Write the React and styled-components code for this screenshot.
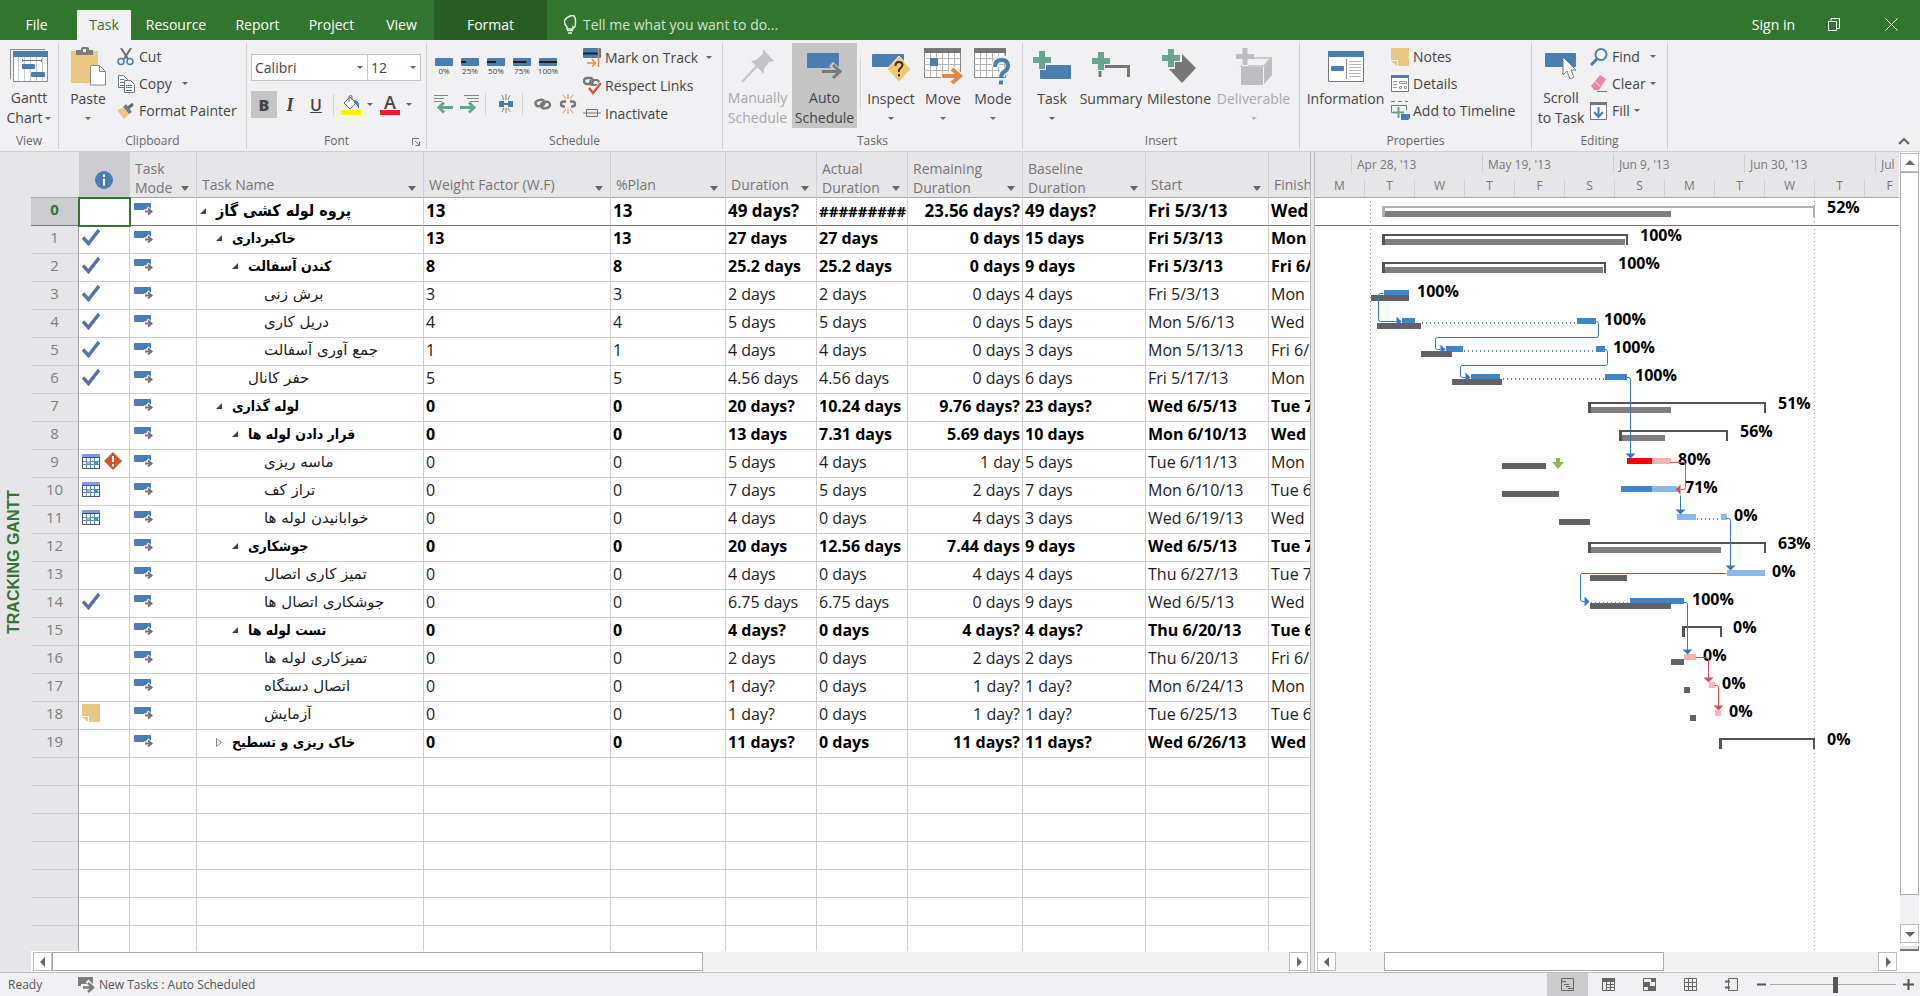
import { useState } from 'react';
import styled, { createGlobalStyle } from 'styled-components';

const GREEN = '#31752f';
const BLUE = '#4a7db1';
const GRAY = '#7c7c7e';
const TEAL = '#68a490';
const ORANGE = '#e08a44';

const ROW = 28;

const columns = [
  { id: 'id', label: [], width: 48 },
  { id: 'info', label: [], width: 51 },
  { id: 'mode', label: ['Task', 'Mode'], width: 67 },
  { id: 'name', label: ['Task Name'], width: 227 },
  { id: 'weight', label: ['Weight Factor (W.F)'], width: 187 },
  { id: 'plan', label: ['%Plan'], width: 115 },
  { id: 'duration', label: ['Duration'], width: 91 },
  { id: 'actual', label: ['Actual', 'Duration'], width: 91 },
  { id: 'remaining', label: ['Remaining', 'Duration'], width: 115 },
  { id: 'baseline', label: ['Baseline', 'Duration'], width: 123 },
  { id: 'start', label: ['Start'], width: 123 },
  { id: 'finish', label: ['Finish'], width: 120 },
];

// level, outline state, marks, name, weight, plan, duration, actual, remaining, baseline, start, finish
const tasks = [
  [0, 'open', [], 'پروه لوله کشی گاز', '13', '13', '49 days?', '#########', '23.56 days?', '49 days?', 'Fri 5/3/13', 'Wed'],
  [1, 'open', ['done'], 'خاکبرداری', '13', '13', '27 days', '27 days', '0 days', '15 days', 'Fri 5/3/13', 'Mon'],
  [2, 'open', ['done'], 'کندن آسفالت', '8', '8', '25.2 days', '25.2 days', '0 days', '9 days', 'Fri 5/3/13', 'Fri 6/'],
  [3, '', ['done'], 'برش زنی', '3', '3', '2 days', '2 days', '0 days', '4 days', 'Fri 5/3/13', 'Mon'],
  [3, '', ['done'], 'دریل کاری', '4', '4', '5 days', '5 days', '0 days', '5 days', 'Mon 5/6/13', 'Wed'],
  [3, '', ['done'], 'جمع آوری آسفالت', '1', '1', '4 days', '4 days', '0 days', '3 days', 'Mon 5/13/13', 'Fri 6/'],
  [2, '', ['done'], 'حفر کانال', '5', '5', '4.56 days', '4.56 days', '0 days', '6 days', 'Fri 5/17/13', 'Mon'],
  [1, 'open', [], 'لوله گذاری', '0', '0', '20 days?', '10.24 days', '9.76 days?', '23 days?', 'Wed 6/5/13', 'Tue 7'],
  [2, 'open', [], 'قرار دادن لوله ها', '0', '0', '13 days', '7.31 days', '5.69 days', '10 days', 'Mon 6/10/13', 'Wed'],
  [3, '', ['calendar', 'warning'], 'ماسه ریزی', '0', '0', '5 days', '4 days', '1 day', '5 days', 'Tue 6/11/13', 'Mon'],
  [3, '', ['calendar'], 'تراز کف', '0', '0', '7 days', '5 days', '2 days', '7 days', 'Mon 6/10/13', 'Tue 6'],
  [3, '', ['calendar'], 'خوابانیدن لوله ها', '0', '0', '4 days', '0 days', '4 days', '3 days', 'Wed 6/19/13', 'Wed'],
  [2, 'open', [], 'جوشکاری', '0', '0', '20 days', '12.56 days', '7.44 days', '9 days', 'Wed 6/5/13', 'Tue 7'],
  [3, '', [], 'تمیز کاری اتصال', '0', '0', '4 days', '0 days', '4 days', '4 days', 'Thu 6/27/13', 'Tue 7'],
  [3, '', ['done'], 'جوشکاری اتصال ها', '0', '0', '6.75 days', '6.75 days', '0 days', '9 days', 'Wed 6/5/13', 'Wed'],
  [2, 'open', [], 'تست لوله ها', '0', '0', '4 days?', '0 days', '4 days?', '4 days?', 'Thu 6/20/13', 'Tue 6'],
  [3, '', [], 'تمیزکاری لوله ها', '0', '0', '2 days', '0 days', '2 days', '2 days', 'Thu 6/20/13', 'Fri 6/'],
  [3, '', [], 'اتصال دستگاه', '0', '0', '1 day?', '0 days', '1 day?', '1 day?', 'Mon 6/24/13', 'Mon'],
  [3, '', ['note'], 'آزمایش', '0', '0', '1 day?', '0 days', '1 day?', '1 day?', 'Tue 6/25/13', 'Tue 6'],
  [1, 'closed', [], 'خاک ریزی و تسطیح', '0', '0', '11 days?', '0 days', '11 days?', '11 days?', 'Wed 6/26/13', 'Wed'],
];

const emptyRows = 7;

// summary / baseline: [from, to], bars: [from, to, color], at: label x
const chartRows = [
  { summary: [67, 500], light: true, progress: 356, label: '52%', at: 512 },
  { summary: [67, 313], progress: 310, label: '100%', at: 325 },
  { summary: [67, 291], progress: 288, label: '100%', at: 303 },
  { bars: [[69, 94, 'done']], baseline: [56, 94], label: '100%', at: 102 },
  { bars: [[87, 100, 'done'], [262, 281, 'done']], split: [107, 261], baseline: [62, 106], label: '100%', at: 289 },
  { bars: [[131, 148, 'done'], [281, 290, 'done']], split: [149, 280], baseline: [106, 137], label: '100%', at: 298 },
  { bars: [[156, 185, 'done'], [290, 312, 'done']], split: [188, 289], baseline: [137, 187], label: '100%', at: 320 },
  { summary: [273, 451], progress: 356, label: '51%', at: 463 },
  { summary: [304, 413], progress: 350, label: '56%', at: 425 },
  { bars: [[312, 337, 'criticalDone'], [337, 356, 'critical']], baseline: [187, 231], label: '80%', at: 363, deadline: 243 },
  { bars: [[306, 337, 'done'], [337, 362, 'todo']], baseline: [187, 244], label: '71%', at: 370 },
  { bars: [[362, 381, 'todo'], [406, 412, 'todo']], split: [382, 405], baseline: [244, 275], label: '0%', at: 419 },
  { summary: [273, 451], progress: 406, label: '63%', at: 463 },
  { bars: [[412, 450, 'todo']], baseline: [275, 312], label: '0%', at: 457 },
  { bars: [[315, 369, 'done']], split: [276, 315], baseline: [275, 356], label: '100%', at: 377 },
  { summary: [367, 407], label: '0%', at: 418 },
  { bars: [[369, 381, 'critical']], baseline: [356, 369], label: '0%', at: 388 },
  { bars: [[394, 400, 'critical']], baseline: [369, 375], label: '0%', at: 407 },
  { bars: [[400, 406, 'critical']], baseline: [375, 381], label: '0%', at: 414 },
  { summary: [404, 500], label: '0%', at: 512 },
];

const barColors = { done: '#3d85d1', todo: '#8bb9ea', criticalDone: '#ff0000', critical: '#ffb0b0' };

const links = [
  { d: 'M69 95H66Q64 95 64 97V121Q64 123 66 123H82', head: 'M82 118L87 123L82 128Z' },
  { d: 'M281 123H282Q284 123 284 125V137Q284 139 282 139H123Q121 139 121 141V149Q121 151 123 151H126', head: 'M126 146L131 151L126 156Z' },
  { d: 'M290 151H291Q293 151 293 153V165Q293 167 291 167H148Q146 167 146 169V177Q146 179 148 179H151', head: 'M151 174L156 179L151 184Z' },
  { d: 'M312 179H314Q316 179 316 181V256', head: 'M311 255H321L316 260Z' },
  { d: 'M356 264H369Q371 264 371 266V289Q371 291 369 291H366', head: 'M366 286L361 291L366 296Z', critical: true },
  { d: 'M366 297V312', head: 'M361 311H371L366 316Z' },
  { d: 'M412 320H414Q416 320 416 322V368', head: 'M411 367H421L416 372Z' },
  { d: 'M412 375H268Q266 375 266 377V401Q266 403 268 403H270', head: 'M270 398L275 403L270 408Z' },
  { d: 'M369 404H371Q373 404 373 406V452', head: 'M368 451H378L373 456Z' },
  { d: 'M381 459H392Q394 459 394 461V480', head: 'M389 479H399L394 484Z', critical: true },
  { d: 'M400 487H402Q404 487 404 489V508', head: 'M399 507H409L404 512Z', critical: true },
];

const months = ["Apr 28, '13", "May 19, '13", "Jun 9, '13", "Jun 30, '13", 'Jul'];
const days = ['M', 'T', 'W', 'T', 'F', 'S', 'S', 'M', 'T', 'W', 'T', 'F'];

/* ---------- icons ---------- */

const Svg = ({ w, h, children }) => (
  <svg width={w} height={h} viewBox={`0 0 ${w} ${h}`} fill="none" aria-hidden="true">{children}</svg>
);

const GanttIcon = () => (
  <Svg w={38} h={34}>
    <path d="M.5 30V.5H35" stroke="#8a8a8a" />
    <path d="M3.5 3.5h34v29h-34z" fill="#fff" stroke="#8a8a8a" />
    <path d="M3 2h35v6H3z" fill={BLUE} />
    <path d="M8.5 8v24M14.5 8v24M20.5 8v24M26.5 8v24M32.5 8v24" stroke="#c5ccd6" />
    <path d="M12 11.5h20M12.5 10v3M31.5 10v3" stroke="#777" />
    <rect x="12" y="15" width="13" height="5" rx="1" fill={BLUE} />
    <rect x="21" y="23" width="14" height="5" rx="1" fill={BLUE} />
  </Svg>
);

const PasteIcon = () => (
  <Svg w={36} h={39}>
    <rect x="1" y="4" width="27" height="32" fill="#ecc77f" />
    <path d="M6 8V3h5V1.500Q11 0 13 0h4q2 0 2 1.500V3h4v5z" fill={GRAY} />
    <rect x="13" y="2" width="3" height="3" fill="#f1f0f2" />
    <path d="M20.500 18.500h9l6 6v13.500h-15z" fill="#fff" stroke="#8a8a8a" />
    <path d="M29.500 18.500v6h6" stroke="#8a8a8a" />
  </Svg>
);

const CutIcon = () => (
  <Svg w={18} h={18}>
    <path d="M4 0l7 11M14 0L7 11" stroke="#6c6c6e" strokeWidth="2" />
    <circle cx="4" cy="13.500" r="3" stroke={BLUE} strokeWidth="1.500" />
    <circle cx="13" cy="13.500" r="3" stroke={BLUE} strokeWidth="1.500" />
  </Svg>
);

const CopyIcon = () => (
  <Svg w={18} h={18}>
    <path d="M1.500.5h5l4 4v8h-9z" fill="#fff" stroke="#777" />
    <path d="M3 4.500h4M3 7.500h4M3 10.500h4" stroke={BLUE} />
    <path d="M7.500 5.500h6l4 4v8h-10z" fill="#fff" stroke="#777" />
    <path d="M9 10.500h6M9 12.500h6M9 15.500h6" stroke={BLUE} />
  </Svg>
);

const BrushIcon = () => (
  <Svg w={18} h={16}>
    <path d="M0 7l6-2 6 6-5 5z" fill="#ecc28a" />
    <path d="M6 4l3-3 6 8-3 2z" fill={GRAY} />
    <path d="M11 5l5-4" stroke="#666" strokeWidth="3" />
  </Svg>
);

const BucketIcon = () => (
  <Svg w={20} h={20}>
    <path d="M3 8l6-6 6 6-6 6z" fill="#fff" stroke="#666" />
    <path d="M8 7V2Q8 .5 9.500.5T11 2v3" stroke="#666" />
    <path d="M13 5q6 0 5 9q-2-5-5-6z" fill={BLUE} />
    <rect y="15" width="20" height="5" fill="#fff200" />
  </Svg>
);

const OutdentIcon = ({ flip }) => (
  <Svg w={20} h={20}>
    <path d={flip ? 'M5 1.500h15M8 4.500h12M11 7.500h9' : 'M0 1.500h14M0 4.500h10M0 7.500h8'} stroke="#888" />
    <path d={flip ? 'M1 13.500h14M10 8.500l5 5-5 5' : 'M19 13.500H6M10 8.500l-5 5 5 5'} stroke={TEAL} strokeWidth="3" />
  </Svg>
);

const SplitIcon = () => (
  <Svg w={16} h={20}>
    <path d="M1 7h5v6H1zM10 7h5v6h-5z" fill={BLUE} />
    <path d="M6 10h4" stroke={BLUE} strokeWidth="2" />
    <path d="M8 0v6M8 14v5M4 1l2 5M12 1l-2 5M4 18l2-4M12 18l-2-4" stroke="#888" />
  </Svg>
);

const LinkIcon = () => (
  <Svg w={18} h={12}>
    <rect x="1.500" y="2" width="9" height="6" rx="3" stroke="#777" strokeWidth="2.500" transform="rotate(-12 6 5)" />
    <rect x="7" y="4" width="9" height="6" rx="3" stroke="#777" strokeWidth="2.500" transform="rotate(-12 12 7)" />
  </Svg>
);

const UnlinkIcon = () => (
  <Svg w={18} h={22}>
    <path d="M7 8.500H5q-3 0-3 2.500t3 2.500h1M11 8.500h2q3 0 3 2.500t-3 2.500h-1" stroke="#777" strokeWidth="2.500" />
    <path d="M9 1v5M9 16v5M4 2l3 4M14 2l-3 4M4 20l3-4M14 20l-3-4" stroke={ORANGE} />
  </Svg>
);

const TrackIcon = () => (
  <Svg w={19} h={19}>
    <rect width="18" height="10" rx="1" fill={BLUE} />
    <path d="M0 5.500h15" stroke="#222" strokeWidth="2" />
    <path d="M15.500 0v19M4 15h8M9 11.500l3.500 3.500L9 18.500" stroke={ORANGE} strokeWidth="1.500" />
  </Svg>
);

const RespectIcon = () => (
  <Svg w={19} h={19}>
    <rect x="1" y="2" width="9" height="6" rx="3" stroke="#777" strokeWidth="2.500" />
    <rect x="7" y="4" width="9" height="5" rx="2.500" stroke="#777" strokeWidth="2" />
    <path d="M6 12l4 5 8-10" stroke="#fff" strokeWidth="4" />
    <path d="M6 12l4 5 8-10" stroke="#d1552f" strokeWidth="2.500" />
  </Svg>
);

const InactivateIcon = () => (
  <Svg w={18} h={8}>
    <path d="M3.500.5h11v7h-11z" stroke="#777" />
    <path d="M0 4h18" stroke="#777" />
  </Svg>
);

const PinIcon = () => (
  <Svg w={36} h={36}>
    <path d="M23 1l11 12-5 1-5 7v5L11 13l5-1 7-6z" fill="#c3c3c5" />
    <path d="M17 18L2 34" stroke="#c3c3c5" strokeWidth="2" />
  </Svg>
);

const AutoIcon = () => (
  <Svg w={36} h={30}>
    <rect x="0" y="2" width="32" height="15" rx="1" fill={BLUE} />
    <path d="M15 20h15M24 13l8 7-8 7" stroke="#c5c5c5" strokeWidth="6" />
    <path d="M15 20.500h17M26 14l7 6.500-7 6.500" stroke="#777" strokeWidth="3" />
  </Svg>
);

const InspectIcon = () => (
  <Svg w={38} h={32}>
    <rect x="0" y="4" width="32" height="13" rx="1" fill={BLUE} />
    <path d="M27 6l12 13-12 13-12-13z" fill="#f1c96b" stroke="#f1f0f2" />
    <path d="M23.500 16q0-4 3.500-4t3.500 3q0 2-2 3.200T27 22M27 24v2.500" stroke="#333" strokeWidth="2" />
  </Svg>
);

const CalendarGrid = ({ w = 36 }) => (
  <>
    <path d={`M.5.5h${w}v29H.5z`} fill="#fff" stroke="#888" />
    <path d={`M6.500 5v24M12.500 5v24M18.500 5v24M24.500 5v24M30.500 5v24M0 10.500h${w}M0 16.500h${w}M0 22.500h${w}`} stroke="#b5b5b5" />
    <path d={`M0 0h${w + 1}v5H0z`} fill="#777" />
  </>
);

const MoveIcon = () => (
  <Svg w={39} h={37}>
    <CalendarGrid />
    <path d="M6 10h8v8H6z" fill={BLUE} />
    <path d="M17 28h14M27 20l9 8-9 8" stroke="#f1f0f2" strokeWidth="7" />
    <path d="M18 28h17M28 21l8 7-8 7" stroke={ORANGE} strokeWidth="4" />
  </Svg>
);

const ModeIcon = () => (
  <Svg w={38} h={37}>
    <CalendarGrid w={31} />
    <path d="M21 19q0-8 7-8t7 6q0 4-4 6t-4 6M27 32v4" stroke="#f1f0f2" strokeWidth="7" />
    <path d="M21 19q0-7 6.500-7t6.500 5.500q0 4-3.500 6T27 30M27 32.500v4" stroke={BLUE} strokeWidth="4" />
  </Svg>
);

const AddTaskIcon = () => (
  <Svg w={38} h={30}>
    <rect x="7" y="14" width="31" height="14" rx="1" fill={BLUE} />
    <path d="M9 0v19M0 9h19" stroke="#f1f0f2" strokeWidth="8" />
    <path d="M9 0v18M0 9h18" stroke={TEAL} strokeWidth="6" />
  </Svg>
);

const AddSummaryIcon = () => (
  <Svg w={38} h={28}>
    <path d="M8 25V14.500h28.500V25" stroke="#777" strokeWidth="3" />
    <path d="M9 0v19M0 9h19" stroke="#f1f0f2" strokeWidth="8" />
    <path d="M9 0v18M0 9h18" stroke={TEAL} strokeWidth="6" />
  </Svg>
);

const AddMilestoneIcon = () => (
  <Svg w={34} h={34}>
    <path d="M20 5l14 14-14 15L6 19z" fill="#777" />
    <path d="M9 0v20M0 9h20" stroke="#f1f0f2" strokeWidth="8" />
    <path d="M9 0v18M0 9h18" stroke={TEAL} strokeWidth="6" />
  </Svg>
);

const DeliverableIcon = () => (
  <Svg w={36} h={37}>
    <path d="M5 19h22v18H5z" fill="#bdbdbf" />
    <path d="M5 18l9-8h21l-7 8z" stroke="#bdbdbf" strokeWidth="1.500" />
    <path d="M28 19l8-9v17l-8 9z" fill="#bdbdbf" />
    <path d="M9 0v18M0 8.500h18" stroke="#f1f0f2" strokeWidth="7" />
    <path d="M9 0v17M0 8.500h18" stroke="#bdbdbf" strokeWidth="5" />
  </Svg>
);

const InformationIcon = () => (
  <Svg w={36} h={31}>
    <path d="M.5.5h35v30H.5z" fill="#fff" stroke="#777" />
    <path d="M0 0h36v6H0z" fill={BLUE} />
    <rect x="3" y="15" width="13" height="5" rx="1" fill={BLUE} />
    <path d="M18.500 8v20" stroke="#888" />
    <path d="M21 10.500h12M21 13.500h12M21 16.500h12M21 19.500h12M21 22.500h12M21 25.500h12" stroke="#b5b5b5" />
  </Svg>
);

const NoteIcon = () => (
  <Svg w={18} h={18}>
    <path d="M0 0h18v18H7v-6H0z" fill="#e8c684" />
    <path d="M0 13h6v5z" fill="#e8c684" />
  </Svg>
);

const DetailsIcon = () => (
  <Svg w={18} h={17}>
    <path d="M.5.5h17v16H.5z" fill="#fff" stroke="#777" />
    <path d="M0 0h18v3H0z" fill={BLUE} />
    <path d="M2 6.500h4M2 9.500h4M2 12.500h4M8.500 6.500h7v2h-7zM8.500 11.500h2v2h-2zM13.500 11.500h2v2h-2z" stroke="#999" />
  </Svg>
);

const TimelineIcon = () => (
  <Svg w={19} h={19}>
    <path d="M0 .5h4M7 .5h4M14 .5h3M3 11.500H.5v-7h15V9" stroke="#777" />
    <path d="M7.500 6v11M2 11.500h11" stroke={TEAL} strokeWidth="2" />
    <path d="M10 13h9v4l-2 2h-7z" fill={BLUE} />
  </Svg>
);

const ScrollIcon = () => (
  <Svg w={32} h={28}>
    <rect x="0" y="1" width="31" height="14" rx="1" fill={BLUE} />
    <path d="M18 5v18l4-4 3 8 4-2-3-7h5z" fill="#fff" stroke="#777" />
  </Svg>
);

const FindIcon = () => (
  <Svg w={18} h={18}>
    <circle cx="11" cy="6.500" r="5.500" fill="#fff" stroke={BLUE} strokeWidth="2" />
    <path d="M7 11l-6 6" stroke={BLUE} strokeWidth="3" />
  </Svg>
);

const ClearIcon = () => (
  <Svg w={18} h={17}>
    <path d="M10 0l6 4-7 11H4l-3-4z" fill="#e8879b" />
    <path d="M4 6l6 5" stroke="#f1f0f2" />
    <path d="M7 16.500h10" stroke="#777" />
  </Svg>
);

const FillIcon = () => (
  <Svg w={17} h={18}>
    <path d="M.5.5h16v17H.5z" fill="#fff" stroke="#777" />
    <path d="M0 0h17v3H0z" fill="#777" />
    <path d="M8.500 5v9M4 10l4.500 5 4.500-5" stroke={BLUE} strokeWidth="2" />
  </Svg>
);

const BulbIcon = () => (
  <Svg w={14} h={19}>
    <path d="M4 12Q1.500 9.500 1.500 6.500T7 1t5.500 5.500T10 12v2H4z" stroke="#e8f0e8" strokeWidth="1.500" />
    <path d="M4 15.500h6M5 18h4" stroke="#e8f0e8" strokeWidth="1.500" />
  </Svg>
);

const ModeMark = () => (
  <Svg w={20} h={15}>
    <rect x="1" y="1" width="17" height="7" rx="1" fill={BLUE} />
    <path d="M11 9.500h6M14 6l4 3.500" stroke="#fff" strokeWidth="4" />
    <path d="M12 9.500h6M15 6.500l3.500 3-3.500 3" stroke="#7a7272" strokeWidth="2" />
  </Svg>
);

const DoneMark = () => (
  <Svg w={18} h={17}>
    <path d="M1 8.500l5.500 6L17 1" stroke="#5673a8" strokeWidth="3.500" />
  </Svg>
);

const CalendarMark = () => (
  <Svg w={18} h={15}>
    <path d="M0 0h18v15H0z" fill="#3d5a80" />
    <path d="M0 0h18v3H0z" fill="#7b9be8" />
    <path d="M1 4h16v10H1z" fill="#fff" />
    <path d="M4.500 4v10M8.500 4v10M12.500 4v10M1 7.500h16M1 10.500h16" stroke="#6d87a5" />
    <path d="M5 7h3v3H5z" fill="#9dbad5" />
    <path d="M12 7h4v4h-4z" fill="#1aa3d8" />
  </Svg>
);

const WarningMark = () => (
  <Svg w={18} h={18}>
    <path d="M9 0l9 9-9 9-9-9z" fill="#d35230" />
    <path d="M9 4v6M9 12v2.500" stroke="#fff" strokeWidth="2" />
  </Svg>
);

const marks = { done: DoneMark, calendar: CalendarMark, warning: WarningMark, note: NoteIcon };

const PercentIcon = ({ value }) => (
  <Svg w={18} h={8}>
    <rect width="18" height="8" rx="1" fill={BLUE} />
    {value > 0 && <path d={`M0 4h${Math.max(5, (18 * value) / 100)}`} stroke="#1e1e1e" strokeWidth="2" />}
  </Svg>
);

const GanttViewIcon = () => (
  <Svg w={15} h={15}>
    <path d="M1.500 1.500h12v12h-12zM1 4.500h5M4 7.500h5M6 9.500h4M8 11.500h5" stroke="#666" />
  </Svg>
);

const UsageViewIcon = () => (
  <Svg w={15} h={15}>
    <path d="M1 1h13v4H1z" fill="#666" />
    <path d="M1.500 1.500h12v12h-12zM5.500 5v9M9.500 5v9M5 7.500h9M5 10.500h9" stroke="#666" />
  </Svg>
);

const PlannerViewIcon = () => (
  <Svg w={15} h={15}>
    <path d="M9 1h5v4H9zM1 5h7v4H1zM6 10h8v4H6z" fill="#666" />
    <path d="M1.500 1.500h12v12h-12zM1 9.500h13" stroke="#666" />
  </Svg>
);

const SheetViewIcon = () => (
  <Svg w={15} h={15}>
    <path d="M1.500 1.500h12v12h-12zM5.500 1v13M9.500 1v13M1 5.500h13M1 9.500h13" stroke="#666" />
  </Svg>
);

const ReportViewIcon = () => (
  <Svg w={15} h={15}>
    <path d="M4.500 1.500h9v12h-9z" stroke="#666" />
    <path d="M1 4.500h5M1 10.500h5" stroke="#666" strokeWidth="2" />
  </Svg>
);

const statusViews = [
  ['Gantt chart', GanttViewIcon],
  ['Task usage', UsageViewIcon],
  ['Team planner', PlannerViewIcon],
  ['Resource sheet', SheetViewIcon],
  ['Report', ReportViewIcon],
];

/* ---------- parts ---------- */

const BigTool = ({ icon, lines, width, caret, active, disabled }) => (
  <BigButton $width={width} $active={active} disabled={disabled}>
    <IconSlot>{icon}</IconSlot>
    {lines.map((line, i) => (
      <BigLine key={line}>
        {line}
        {caret === 'inline' && i === lines.length - 1 && <Caret />}
      </BigLine>
    ))}
    {caret === 'below' && <BigLine><Caret $faded={disabled} /></BigLine>}
  </BigButton>
);

const SmallTool = ({ icon, label, caret, gap }) => (
  <SmallButton>
    <SmallIcon>{icon}</SmallIcon>
    {label}
    {caret && <Caret $gap={gap} />}
  </SmallButton>
);

const Group = ({ title, width, launcher, inset, children }) => (
  <GroupBox $width={width}>
    <GroupBody $inset={inset}>{children}</GroupBody>
    <GroupTitle>
      {title}
      {launcher && (
        <Launcher aria-label="Font settings">
          <Svg w={8} h={8}>
            <path d="M.5 7V.5H7M3 3l4 4M7.500 3.500v4h-4" stroke="#777" />
          </Svg>
        </Launcher>
      )}
    </GroupTitle>
  </GroupBox>
);

const Ribbon = () => {
  const [font, setFont] = useState('Calibri');
  const [size, setSize] = useState('12');

  return (
    <RibbonBar>
      <Group title="View" width={59}>
        <BigTool icon={<GanttIcon />} lines={['Gantt', 'Chart']} width={58} caret="inline" />
      </Group>

      <Group title="Clipboard" width={188}>
        <BigTool icon={<PasteIcon />} lines={['Paste']} width={58} caret="below" />
        <Stack>
          <SmallTool icon={<CutIcon />} label="Cut" />
          <SmallTool icon={<CopyIcon />} label="Copy" caret gap={10} />
          <SmallTool icon={<BrushIcon />} label="Format Painter" />
        </Stack>
      </Group>

      <Group title="Font" width={180} launcher>
        <FontTools>
          <Pickers>
            <Picker $width={117}>
              <select aria-label="Font" value={font} onChange={(e) => setFont(e.target.value)}>
                <option>Calibri</option>
                <option>Arial</option>
              </select>
              <Caret />
            </Picker>
            <Picker $width={54}>
              <select aria-label="Font size" value={size} onChange={(e) => setSize(e.target.value)}>
                <option>12</option>
                <option>14</option>
              </select>
              <Caret />
            </Picker>
          </Pickers>
          <ToolRow>
            <FormatButton $active><b>B</b></FormatButton>
            <FormatButton><i>I</i></FormatButton>
            <FormatButton><u>U</u></FormatButton>
            <Divider />
            <ColorButton aria-label="Background color"><BucketIcon /><Caret /></ColorButton>
            <ColorButton aria-label="Font color"><FontSwatch>A</FontSwatch><Caret /></ColorButton>
          </ToolRow>
        </FontTools>
      </Group>

      <Group title="Schedule" width={296}>
        <ScheduleTools>
          <ToolRow>
            {[0, 25, 50, 75, 100].map((value) => (
              <PercentButton key={value}>
                <PercentIcon value={value} />
                {value}%
              </PercentButton>
            ))}
          </ToolRow>
          <ToolRow>
            <IconButton aria-label="Outdent"><OutdentIcon /></IconButton>
            <IconButton aria-label="Indent"><OutdentIcon flip /></IconButton>
            <Divider />
            <IconButton aria-label="Split task"><SplitIcon /></IconButton>
            <Divider />
            <IconButton aria-label="Link tasks"><LinkIcon /></IconButton>
            <IconButton aria-label="Unlink tasks"><UnlinkIcon /></IconButton>
          </ToolRow>
        </ScheduleTools>
        <Stack $row={28}>
          <SmallTool icon={<TrackIcon />} label="Mark on Track" caret gap={8} />
          <SmallTool icon={<RespectIcon />} label="Respect Links" />
          <SmallTool icon={<InactivateIcon />} label="Inactivate" />
        </Stack>
      </Group>

      <Group title="Tasks" width={300}>
        <BigTool icon={<PinIcon />} lines={['Manually', 'Schedule']} width={69} disabled />
        <BigTool icon={<AutoIcon />} lines={['Auto', 'Schedule']} width={65} active />
        <Divider $tall />
        <BigTool icon={<InspectIcon />} lines={['Inspect']} width={54} caret="below" />
        <BigTool icon={<MoveIcon />} lines={['Move']} width={50} caret="below" />
        <BigTool icon={<ModeIcon />} lines={['Mode']} width={50} caret="below" />
      </Group>

      <Group title="Insert" width={277} inset>
        <BigTool icon={<AddTaskIcon />} lines={['Task']} width={50} caret="below" />
        <BigTool icon={<AddSummaryIcon />} lines={['Summary']} width={68} />
        <BigTool icon={<AddMilestoneIcon />} lines={['Milestone']} width={68} />
        <BigTool icon={<DeliverableIcon />} lines={['Deliverable']} width={81} caret="below" disabled />
      </Group>

      <Group title="Properties" width={232}>
        <BigTool icon={<InformationIcon />} lines={['Information']} width={91} />
        <Stack>
          <SmallTool icon={<NoteIcon />} label="Notes" />
          <SmallTool icon={<DetailsIcon />} label="Details" />
          <SmallTool icon={<TimelineIcon />} label="Add to Timeline" />
        </Stack>
      </Group>

      <Group title="Editing" width={136}>
        <BigTool icon={<ScrollIcon />} lines={['Scroll', 'to Task']} width={58} />
        <Stack>
          <SmallTool icon={<FindIcon />} label="Find" caret gap={10} />
          <SmallTool icon={<ClearIcon />} label="Clear" caret gap={4} />
          <SmallTool icon={<FillIcon />} label="Fill" caret gap={4} />
        </Stack>
      </Group>

      <Collapse aria-label="Collapse the ribbon">
        <Svg w={12} h={8}><path d="M1 7l5-5 5 5" stroke="#666" strokeWidth="2" /></Svg>
      </Collapse>
    </RibbonBar>
  );
};

const TaskRow = ({ task, index }) => {
  const [level, outline, flags, name, ...values] = task;
  const heavy = outline !== '';

  return (
    <Row $heavy={heavy} $project={index === 0}>
      <NumberCell>{index}</NumberCell>
      <MarkCell $selected={index === 0}>
        <Marks>
          {flags.map((flag) => {
            const Mark = marks[flag];
            return <Mark key={flag} />;
          })}
        </Marks>
      </MarkCell>
      <MarkCell><Marks><ModeMark /></Marks></MarkCell>
      <Cell>
        <NameBox $level={level}>
          <Toggle>
            {outline === 'open' && <Svg w={6} h={6}><path d="M6 0v6H0z" fill="#444" /></Svg>}
            {outline === 'closed' && <Svg w={6} h={9}><path d="M.5.5l5 4-5 4z" fill="#fff" stroke="#888" /></Svg>}
          </Toggle>
          <Name $heavy={heavy} $project={index === 0}>{name}</Name>
        </NameBox>
      </Cell>
      {values.map((value, i) => (
        <Cell key={columns[i + 4].id} $right={columns[i + 4].id === 'remaining'}>
          {value.startsWith('#') ? <Hashes>{value}</Hashes> : value}
        </Cell>
      ))}
    </Row>
  );
};

const Sheet = () => (
  <SheetTable>
    <colgroup>
      {columns.map((c) => <col key={c.id} width={c.width} />)}
    </colgroup>
    <thead>
      <tr>
        {columns.map((c) => (
          <HeadCell key={c.id} $shade={c.id === 'info'} $bare={c.id === 'id'}>
            {c.id === 'info' && (
              <InfoBadge>
                <Svg w={18} h={18}>
                  <circle cx="9" cy="9" r="9" fill={BLUE} />
                  <path d="M9 3.500v2.500M9 7.500v7" stroke="#fff" strokeWidth="2" />
                </Svg>
              </InfoBadge>
            )}
            {c.label.length > 0 && (
              <HeadBox $double={c.label.length > 1}>
                <span>{c.label.map((line) => <HeadLine key={line}>{line}</HeadLine>)}</span>
                <Caret $large />
              </HeadBox>
            )}
          </HeadCell>
        ))}
      </tr>
    </thead>
    <tbody>
      {tasks.map((task, i) => <TaskRow key={i} task={task} index={i} />)}
      {Array.from({ length: emptyRows }, (_, i) => (
        <Row key={i}>
          {columns.map((c) => (c.id === 'id' ? <NumberCell key={c.id} /> : <Cell key={c.id} />))}
        </Row>
      ))}
    </tbody>
  </SheetTable>
);

const ChartRow = ({ row, index }) => {
  const top = index * ROW;
  const { summary, light, progress, bars = [], split, baseline, deadline, label, at } = row;

  return (
    <g>
      {progress && <rect x={summary[0] + 3} y={top + 13} width={progress - summary[0] - 3} height="6" fill="#807e82" />}
      {summary && (
        <path
          d={`M${summary[0]} ${top + 19}v-11H${summary[1]}v11h-2v-9H${summary[0] + 3}v9z`}
          fill={light ? '#b1afb1' : '#555256'}
        />
      )}
      {bars.map(([from, to, kind]) => (
        <rect key={from} x={from} y={top + 8} width={to - from} height="6" fill={barColors[kind]} />
      ))}
      {split && <path d={`M${split[0]} ${top + 13}H${split[1]}`} stroke="#5c8cc4" strokeWidth="2" strokeDasharray="1 3" />}
      {baseline && <rect x={baseline[0]} y={top + 13} width={baseline[1] - baseline[0]} height="6" fill="#636165" />}
      {deadline && <path d={`M${deadline - 2} ${top + 8}v4h-4l6 7 6-7h-4v-4z`} fill="#8cb94a" />}
      <BarLabel x={at} y={top + 15}>{label}</BarLabel>
    </g>
  );
};

const Chart = () => (
  <ChartSvg role="img" aria-label="Tracking Gantt chart">
    <path d="M55.500 3V760M499.500 3V760" stroke="#8c8a8e" strokeDasharray="1 3" />
    <path d="M0 27.500H2000" stroke="#7a737b" />
    {chartRows.map((row, i) => <ChartRow key={i} row={row} index={i} />)}
    {links.map(({ d, head, critical }) => (
      <g key={d} transform="translate(-.5 .5)">
        <path d={d} fill="none" stroke={critical ? '#cd5256' : '#3577bd'} />
        <path d={head} fill={critical ? '#cd5256' : '#3577bd'} />
      </g>
    ))}
  </ChartSvg>
);

const arrowShapes = { left: 'M8 1v10L3 6z', right: 'M4 1v10l5-5z', up: 'M1 8h10L6 3z', down: 'M1 4h10L6 9z' };

const Arrow = ({ dir }) => (
  <ScrollButton aria-label={`Scroll ${dir}`}>
    <Svg w={12} h={12}><path d={arrowShapes[dir]} fill="#666" /></Svg>
  </ScrollButton>
);

const App = () => {
  const [zoom, setZoom] = useState(52);

  return (
    <Window>
      <GlobalStyle />
      <TitleBar>
        <Tab $width={77} $file>File</Tab>
        <Tab $width={54} $active>Task</Tab>
        <Tab $width={90}>Resource</Tab>
        <Tab $width={73}>Report</Tab>
        <Tab $width={75}>Project</Tab>
        <Tab $width={65}>View</Tab>
        <Tab $width={113} $context>Format</Tab>
        <TellMe>
          <BulbIcon />
          <input aria-label="Tell me what you want to do" placeholder="Tell me what you want to do..." />
        </TellMe>
        <WindowTools>
          <SignIn href="#signin">Sign in</SignIn>
          <WindowButton aria-label="Restore">
            <Svg w={12} h={13}><path d="M.5 3.500h8v9h-8zM3 3V.5h8.500v10H9" stroke="#fff" /></Svg>
          </WindowButton>
          <WindowButton aria-label="Close">
            <Svg w={13} h={13}><path d="M.5.5l12 12M12.500.5l-12 12" stroke="#fff" /></Svg>
          </WindowButton>
        </WindowTools>
      </TitleBar>

      <Ribbon />

      <Workspace>
        <ViewName>TRACKING GANTT</ViewName>
        <SheetPane>
          <Clip><Sheet /></Clip>
          <ScrollBar>
            <Arrow dir="left" />
            <Thumb $size={651} />
            <Track />
            <Arrow dir="right" />
          </ScrollBar>
        </SheetPane>
        <Splitter />
        <ChartPane>
          <Scale>
            <MonthRow>
              {months.map((m) => <Month key={m}>{m}</Month>)}
            </MonthRow>
            <DayRow>
              {days.map((d, i) => <Day key={i}>{d}</Day>)}
            </DayRow>
          </Scale>
          <Clip><Chart /></Clip>
          <ScrollBar>
            <Arrow dir="left" />
            <Track $size={48} />
            <Thumb $size={280} />
            <Track />
            <Arrow dir="right" />
          </ScrollBar>
        </ChartPane>
        <VerticalBar>
          <Arrow dir="up" />
          <Thumb $vertical />
          <Track $size={29} />
          <Arrow dir="down" />
          <SplitHandle />
        </VerticalBar>
      </Workspace>

      <StatusBar>
        <Status $width={70}>Ready</Status>
        <StatusMode>
          <Svg w={18} h={16}>
            <path d="M0 0h15v9H0z" fill={GRAY} />
            <path d="M3 9h9M9 4l5 5" stroke="#f1f0f2" strokeWidth="4" />
            <path d="M5 10.500h10M10 6l5 4.500-5 4.500" stroke={GRAY} strokeWidth="2.500" />
          </Svg>
          New Tasks : Auto Scheduled
        </StatusMode>
        <Views>
          {statusViews.map(([name, Icon], i) => (
            <ViewButton key={name} aria-label={name} $active={i === 0}><Icon /></ViewButton>
          ))}
        </Views>
        <ZoomButton aria-label="Zoom out" onClick={() => setZoom(Math.max(0, zoom - 10))}>
          <Svg w={11} h={11}><path d="M1 5.500h9" stroke="#555" strokeWidth="2" /></Svg>
        </ZoomButton>
        <ZoomSlider type="range" aria-label="Zoom" value={zoom} onChange={(e) => setZoom(Number(e.target.value))} />
        <ZoomButton aria-label="Zoom in" onClick={() => setZoom(Math.min(100, zoom + 10))}>
          <Svg w={11} h={11}><path d="M0 5.500h11M5.500 0v11" stroke="#555" strokeWidth="2" /></Svg>
        </ZoomButton>
      </StatusBar>
    </Window>
  );
};

/* ---------- styles ---------- */

const GlobalStyle = createGlobalStyle`
  * {
    box-sizing: border-box;
  }

  body {
    margin: 0;
    font-family: 'Open Sans', 'Noto Sans', 'DejaVu Sans', sans-serif;
    font-size: 14px;
    color: #444;
  }

  button, input, select {
    font: inherit;
    color: inherit;
  }

  button {
    border: none;
    background: none;
    padding: 0;
  }

  svg {
    display: block;
    flex: none;
  }
`;

const Window = styled.div`
  display: flex;
  flex-direction: column;
  height: 100vh;
  overflow: hidden;
  background: #f1f0f2;
`;

const TitleBar = styled.header`
  display: flex;
  align-items: flex-end;
  height: 40px;
  background: ${GREEN};
  color: #fff;
`;

const Tab = styled.button`
  width: ${(p) => p.$width}px;
  height: ${(p) => (p.$context ? 40 : 30)}px;
  padding: ${(p) => (p.$context ? 10 : 0)}px ${(p) => (p.$file ? 4 : 0)}px 2px 0;
  background: ${(p) => (p.$active ? '#f1f0f2' : p.$context ? '#275d25' : 'transparent')};
  color: ${(p) => (p.$active ? GREEN : '#fff')};
`;

const TellMe = styled.label`
  display: flex;
  align-items: center;
  gap: 6px;
  height: 30px;
  padding: 0 0 2px 16px;

  input {
    width: 240px;
    padding: 0;
    border: none;
    outline: none;
    background: transparent;
  }

  input::placeholder {
    color: #d3e2d2;
    opacity: 1;
  }
`;

const WindowTools = styled.div`
  display: flex;
  align-items: center;
  height: 30px;
  margin-left: auto;
  padding: 0 8px 2px 0;
`;

const SignIn = styled.a`
  margin-right: 10px;
  color: #fff;
  text-decoration: none;
`;

const WindowButton = styled.button`
  display: flex;
  justify-content: center;
  width: 57px;

  &:last-child {
    width: 42px;
    margin-left: 8px;
  }
`;

const RibbonBar = styled.section`
  display: flex;
  flex: none;
  height: 112px;
  padding-top: 3px;
  border-bottom: 1px solid #cfced0;
`;

const GroupBox = styled.div`
  display: flex;
  flex-direction: column;
  flex: none;
  width: ${(p) => p.$width}px;
  height: 106px;
  border-right: 1px solid #d2d1d3;
`;

const GroupBody = styled.div`
  display: flex;
  flex: none;
  height: 90px;
  padding-left: ${(p) => (p.$inset ? 4 : 0)}px;
`;

const GroupTitle = styled.div`
  position: relative;
  font-size: 12px;
  line-height: 16px;
  text-align: center;
  color: #666;
`;

const Launcher = styled.button`
  position: absolute;
  right: 6px;
  top: 5px;
`;

const BigButton = styled.button`
  display: flex;
  flex-direction: column;
  align-items: center;
  flex: none;
  width: ${(p) => p.$width}px;
  height: 85px;
  background: ${(p) => (p.$active ? '#c5c5c5' : 'transparent')};
  color: ${(p) => (p.disabled ? '#a9a8aa' : '#444')};
  white-space: nowrap;
`;

const IconSlot = styled.span`
  display: flex;
  align-items: center;
  height: 46px;
`;

const BigLine = styled.span`
  display: flex;
  align-items: center;
  gap: 3px;
  line-height: 20px;
  min-height: 18px;
`;

const Caret = styled.span`
  width: 0;
  height: 0;
  margin-left: ${(p) => p.$gap || 0}px;
  border: ${(p) => (p.$large ? 4 : 3)}px solid transparent;
  border-top: ${(p) => (p.$large ? 5 : 3)}px solid ${(p) => (p.$faded ? '#b5b5b5' : '#666')};
  border-bottom: none;
`;

const Stack = styled.div`
  display: grid;
  grid-auto-rows: ${(p) => p.$row || 27}px;
  align-content: start;
  justify-items: start;
`;

const SmallButton = styled.button`
  display: flex;
  align-items: center;
  white-space: nowrap;
`;

const SmallIcon = styled.span`
  display: flex;
  width: 22px;
`;

const FontTools = styled.div`
  display: flex;
  flex-direction: column;
  gap: 10px;
  padding: 11px 4px 0;
`;

const Pickers = styled.div`
  display: flex;
`;

const Picker = styled.div`
  position: relative;
  width: ${(p) => p.$width}px;

  & + & {
    margin-left: -1px;
  }

  select {
    width: 100%;
    height: 27px;
    padding: 0 3px;
    appearance: none;
    border: 1px solid #c4c3c5;
    border-radius: 0;
    background: #fff;
  }

  ${Caret} {
    position: absolute;
    right: 5px;
    top: 12px;
    pointer-events: none;
  }
`;

const ToolRow = styled.div`
  display: flex;
  align-items: center;
`;

const FormatButton = styled.button`
  width: 26px;
  height: 27px;
  font-size: 16px;
  font-weight: 600;
  background: ${(p) => (p.$active ? '#c5c5c5' : 'transparent')};

  i {
    font-family: 'Liberation Serif', serif;
    font-size: 18px;
  }
`;

const Divider = styled.span`
  width: 1px;
  height: ${(p) => (p.$tall ? 54 : 22)}px;
  margin: ${(p) => (p.$tall ? '14px 3px 0' : '0 7px 0 4px')};
  background: #d2d1d3;
`;

const ColorButton = styled.button`
  display: flex;
  align-items: center;
  gap: 6px;
  width: 39px;
`;

const FontSwatch = styled.span`
  width: 20px;
  height: 20px;
  border-bottom: 5px solid #e3212b;
  font-size: 18px;
  font-weight: 600;
  line-height: 14px;
`;

const ScheduleTools = styled.div`
  display: flex;
  flex-direction: column;
  gap: 17px;
  width: 156px;
  padding: 15px 0 0 4px;
`;

const PercentButton = styled.button`
  display: flex;
  flex-direction: column;
  align-items: center;
  width: 26px;
  font-size: 8px;
  line-height: 10px;
`;

const IconButton = styled.button`
  display: flex;
  justify-content: center;
  align-items: center;
  width: 25px;
  height: 22px;
`;

const Collapse = styled.button`
  align-self: flex-end;
  margin: 0 10px 6px auto;
`;

const Workspace = styled.main`
  display: flex;
  flex: 1;
  min-height: 0;
  background: #fff;
`;

const ViewName = styled.div`
  flex: none;
  width: 31px;
  padding-right: 2px;
  background: #e6e5e8;
  color: ${GREEN};
  font-family: 'Liberation Sans', sans-serif;
  font-size: 16px;
  font-weight: 700;
  line-height: 24px;
  text-align: center;
  writing-mode: vertical-rl;
  transform: rotate(180deg);
`;

const SheetPane = styled.section`
  display: flex;
  flex-direction: column;
  flex: 0 1 1279px;
  min-width: 0;
`;

const Clip = styled.div`
  flex: 1;
  min-height: 0;
  overflow: hidden;
`;

const SheetTable = styled.table`
  width: 1358px;
  table-layout: fixed;
  border-spacing: 0;
  color: #1c1c1c;
  font-size: 16px;
`;

const HeadCell = styled.th`
  height: 46px;
  padding: 0;
  vertical-align: bottom;
  background: ${(p) => (p.$shade ? '#cdccd0' : '#e6e5e8')};
  border-right: 1px solid ${(p) => (p.$bare ? '#e6e5e8' : '#cfced1')};
  border-bottom: 1px solid #a8a7a9;
  color: #777578;
  font-size: 14px;
  font-weight: 400;
  text-align: left;
  white-space: nowrap;
`;

const HeadBox = styled.div`
  display: flex;
  justify-content: space-between;
  align-items: flex-end;
  padding: 0 7px ${(p) => (p.$double ? 0 : 3)}px 5px;

  ${Caret} {
    margin-bottom: ${(p) => (p.$double ? 6 : 3)}px;
  }
`;

const HeadLine = styled.span`
  display: block;
  line-height: 19px;
`;

const InfoBadge = styled.span`
  display: flex;
  justify-content: center;
  padding-bottom: 8px;
`;

const Cell = styled.td`
  height: ${ROW}px;
  padding: 0 2px;
  overflow: hidden;
  border-right: 1px solid #cfced1;
  border-bottom: 1px solid #cfced1;
  line-height: 24px;
  text-align: ${(p) => (p.$right ? 'right' : 'left')};
  vertical-align: top;
  white-space: nowrap;
`;

const NumberCell = styled(Cell)`
  text-align: center;
`;

const MarkCell = styled(Cell)`
  padding: 0 3px;
  outline: ${(p) => (p.$selected ? `2px solid ${GREEN}` : 'none')};
  outline-offset: -1px;
`;

const Row = styled.tr`
  font-weight: ${(p) => (p.$heavy ? 700 : 400)};

  ${Cell} {
    ${(p) => p.$project && 'font-size: 17px; line-height: 26px; border-bottom-color: #7a737b;'}
    ${(p) => p.$heavy && 'color: #000;'}
  }

  ${NumberCell} {
    font-size: 15px;
    line-height: 22px;
    border-right-color: #a09fa2;
    background: ${(p) => (p.$project ? '#cdccd0' : '#e6e5e8')};
    color: ${(p) => (p.$project ? GREEN : '#7f7d81')};
    font-weight: ${(p) => (p.$project ? 700 : 400)};
  }
`;

const Marks = styled.span`
  display: flex;
  align-items: center;
  gap: 4px;
  height: 22px;
`;

const NameBox = styled.span`
  display: flex;
  align-items: center;
  padding-left: ${(p) => 1 + p.$level * 16}px;
`;

const Toggle = styled.span`
  width: 16px;
`;

const Name = styled.bdi`
  font-family: ${(p) => (p.$heavy ? "'DejaVu Sans Condensed', 'DejaVu Sans'" : "'DejaVu Sans'")}, sans-serif;
  font-size: ${(p) => (p.$project ? 16 : p.$heavy ? 14 : 15)}px;
`;

const Hashes = styled.span`
  font-size: 15px;
`;

const Splitter = styled.div`
  flex: none;
  width: 5px;
  background: #e6e5e8;
  border: solid #b9b8bb;
  border-width: 0 1px;
`;

const ChartPane = styled.section`
  display: flex;
  flex-direction: column;
  flex: 1;
  min-width: 0;
`;

const Scale = styled.div`
  flex: none;
  height: 46px;
  overflow: hidden;
  background: #e6e5e8;
  border-bottom: 1px solid #a8a7a9;
  color: #777578;
  font-size: 12px;
`;

const MonthRow = styled.div`
  display: flex;
  padding: 2px 0 0 36px;
`;

const Month = styled.span`
  flex: none;
  width: 131px;
  height: 19px;
  padding-left: 5px;
  border-left: 1px solid #cfced1;
  line-height: 22px;
`;

const DayRow = styled.div`
  display: flex;
  padding-top: 7px;
`;

const Day = styled.span`
  flex: none;
  width: 50px;
  height: 17px;
  border-right: 1px solid #cfced1;
  line-height: 12px;
  text-align: center;
`;

const ChartSvg = styled.svg`
  width: 100%;
  height: 100%;
`;

const BarLabel = styled.text`
  font-size: 16px;
  font-weight: 700;
  fill: #000;
`;

const ScrollBar = styled.div`
  display: flex;
  flex: none;
  height: 21px;
  padding: 1px 2px;
  background: #fff;
`;

const ScrollButton = styled.button`
  display: flex;
  flex: none;
  align-items: center;
  justify-content: center;
  width: 19px;
  height: 19px;
  border: 1px solid #bdbcbe;
  background: #fff;
`;

const Thumb = styled.div`
  flex: ${(p) => (p.$vertical ? '1' : `0 1 ${p.$size}px`)};
  border: 1px solid #a9a8ab;
  background: #fff;
`;

const Track = styled.div`
  flex: ${(p) => (p.$size ? `0 0 ${p.$size}px` : '1')};
  background: #f1f0f2;
`;

const VerticalBar = styled.div`
  display: flex;
  flex-direction: column;
  flex: none;
  width: 21px;
  padding: 1px 1px 21px 1px;
`;

const SplitHandle = styled.div`
  height: 5px;
  margin-top: 3px;
  border: solid #777;
  border-width: 0 1px 2px 0;
  background: #e6e5e8;
`;

const StatusBar = styled.footer`
  display: flex;
  align-items: center;
  flex: none;
  height: 24px;
  border-top: 1px solid #bdbcbe;
  color: #555;
  font-size: 12px;
`;

const Status = styled.span`
  width: ${(p) => p.$width}px;
  padding-left: 8px;
`;

const StatusMode = styled.span`
  display: flex;
  align-items: center;
  gap: 3px;
  padding-left: 8px;
`;

const Views = styled.div`
  display: flex;
  height: 100%;
  margin-left: auto;
`;

const ViewButton = styled.button`
  display: flex;
  align-items: center;
  justify-content: center;
  width: 41px;
  background: ${(p) => (p.$active ? '#cbcacc' : 'transparent')};
`;

const ZoomButton = styled.button`
  display: flex;
  justify-content: center;
  width: 18px;
`;

const ZoomSlider = styled.input`
  width: 126px;
  height: 17px;
  margin: 0;
  appearance: none;
  background: linear-gradient(#aaa, #aaa) center / 100% 1px no-repeat;

  &::-webkit-slider-thumb {
    appearance: none;
    width: 5px;
    height: 16px;
    background: #555;
  }

  & + ${ZoomButton} {
    width: 24px;
  }
`;

export default App;
